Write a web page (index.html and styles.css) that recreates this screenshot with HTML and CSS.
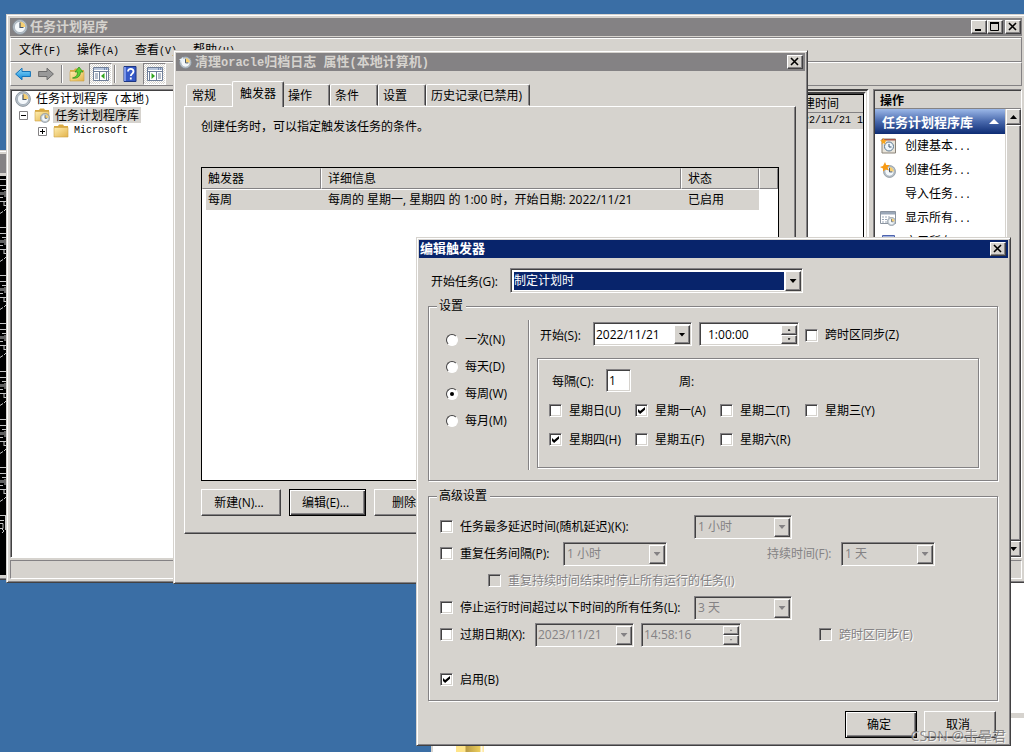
FILE: index.html
```html
<!DOCTYPE html>
<html lang="zh-CN">
<head>
<meta charset="utf-8">
<title>任务计划程序</title>
<link rel="stylesheet" href="styles.css">
</head>
<body>
<svg class="defs" aria-hidden="true">
  <defs>
    <linearGradient id="gold" x1="0" y1="0" x2="1" y2="1"><stop offset="0" stop-color="#ffeeb0"/><stop offset="1" stop-color="#e2b24a"/></linearGradient>
    <linearGradient id="sky" x1="0" y1="0" x2="0" y2="1"><stop offset="0" stop-color="#8fdcfb"/><stop offset="1" stop-color="#0c86d8"/></linearGradient>
    <symbol id="clock" viewBox="0 0 16 16">
      <circle cx="8" cy="8" r="7.4" fill="#b9c3cb" stroke="#7d8790" stroke-width=".8"/>
      <circle cx="8" cy="8" r="5.6" fill="#f4f8fb" stroke="#8c99a6" stroke-width=".6"/>
      <path d="M8 8V2.6A5.4 5.4 0 0 1 13.4 8Z" fill="#f6cf73"/>
      <path d="M8 3.5V8.5H11.5" fill="none" stroke="#4a5868" stroke-width="1.2"/>
    </symbol>
    <symbol id="folder" viewBox="0 0 16 16">
      <path d="M1 3h4l1-1.500h4l1 1.500h4v11H1z" fill="#d9a940"/>
      <path d="M1 4.500h14v9.500H1z" fill="url(#gold)" stroke="#cfa145" stroke-width=".6"/>
    </symbol>
    <symbol id="pane" viewBox="0 0 16 16">
      <path d="M.5 1.500h15v13H.5z" fill="#fff" stroke="#6f7f99"/>
      <path d="M1 2h14v2H1z" fill="#b8c6dc"/><path d="M11 3h1m1 0h1" stroke="#33538d"/>
      <path d="M1 5.500h14" stroke="#6f7f99"/>
    </symbol>
    <symbol id="fragment" viewBox="0 0 6 48">
      <path d="M0 .5h6M0 6.500h6M2 10.500h4M1 13v3M3 13v3M5 12v6M0 18.500h3M0 22.500h6M4 23v4M4 26.500h2M6 30l-2 2M3 32.500L0 34.500" fill="none" stroke="#c6c6c6"/>
    </symbol>
  </defs>
</svg>

<main class="desktop">
  <section class="window console" aria-label="控制台">
    <div class="titlebar"></div>
    <div class="console-screen">
      <svg><use href="#fragment"/></svg><svg><use href="#fragment"/></svg><svg><use href="#fragment"/></svg><svg><use href="#fragment"/></svg><svg><use href="#fragment"/></svg><svg><use href="#fragment"/></svg><svg><use href="#fragment"/></svg>
      <svg viewBox="0 0 6 48"><path d="M0 .5h6M5.500 1v14M0 5.500h4M0 8.500h3v5H0M2 14l2 2-2 2" fill="none" stroke="#c6c6c6"/></svg>
    </div>
  </section>

  <section class="explorer" aria-label="文件夹">
    <div class="explorer-top"></div>
    <div class="explorer-strip"></div>
    <div class="explorer-list"><span class="explorer-folder"></span></div>
  </section>

  <section class="window main-window">
    <header class="titlebar">
      <svg class="icon"><use href="#clock"/></svg>
      <h1 class="title">任务计划程序</h1>
      <div class="caption">
        <button class="cap" aria-label="最小化"><svg viewBox="0 0 12 10"><path d="M2 8h6" stroke="#000" stroke-width="2"/></svg></button>
        <button class="cap" aria-label="最大化"><svg viewBox="0 0 12 10"><path d="M1.500 1v7.500h8V1M1 1h9" fill="none" stroke="#000"/><path d="M1 1h9" stroke="#000" stroke-width="2"/></svg></button>
        <button class="cap cap-close" aria-label="关闭"><svg viewBox="0 0 12 10"><path d="M2 1l7 7M9 1L2 8" stroke="#000" stroke-width="1.600"/></svg></button>
      </div>
    </header>
    <nav class="menubar">
      <button>文件<span class="fix">(F)</span></button><button>操作<span class="fix">(A)</span></button><button>查看<span class="fix">(V)</span></button><button>帮助<span class="fix">(H)</span></button>
    </nav>
    <div class="toolbar">
      <button aria-label="后退"><svg class="icon" viewBox="0 0 16 16"><path d="M.6 8L7 2.200V5.500h8.400v5H7v3.300z" fill="url(#sky)" stroke="#1473b8"/></svg></button>
      <button aria-label="前进"><svg class="icon" viewBox="0 0 16 16"><path d="M15.400 8L9 2.200V5.500H.6v5H9v3.300z" fill="#999" stroke="#6c6c6c"/></svg></button>
      <span class="sep"></span>
      <button class="up" aria-label="上一级"><svg class="icon" viewBox="0 0 16 16"><use href="#folder" y="1"/><path d="M3.500 12c4-1 5-3 5-6H6l4-5 4 5h-2.500c0 4-3 7-8 6z" fill="#5ccf35" stroke="#2b8b19" stroke-width=".7"/></svg></button>
      <button class="pressed" aria-label="控制台树"><svg class="icon" viewBox="0 0 16 16"><use href="#pane"/><path d="M2 8h3M2 10h3M2 12h3M6.500 6v8M13.500 6v8" stroke="#6f7f99"/><path d="M11.500 7v6L8 10z" fill="#2fa51e"/></svg></button>
      <span class="sep"></span>
      <button class="help" aria-label="帮助"><svg class="icon" viewBox="0 0 16 16"><path d="M2 .5h12v15H2z" fill="#3559c7" stroke="#1d3682"/><path d="M2 1h2v14H2z" fill="#7b96e8"/><path d="M6 5.500c0-3.500 5.500-3.300 5.500 0 0 2-2.700 2.200-2.700 4.500M8.800 11.500v2" fill="none" stroke="#fff" stroke-width="1.800"/></svg></button>
      <button class="pressed" aria-label="操作窗格"><svg class="icon" viewBox="0 0 16 16"><use href="#pane"/><path d="M11 8h3M11 10h3M11 12h3M9.500 6v8M2.500 6v8" stroke="#6f7f99"/><path d="M4.500 7v6L8 10z" fill="#2fa51e"/></svg></button>
    </div>
    <div class="panes">
      <ul class="tree">
        <li><svg class="icon"><use href="#clock"/></svg><span class="node">任务计划程序<span class="fix"> (</span>本地<span class="fix">)</span></span></li>
        <li class="lvl1"><button class="twist" aria-label="折叠"><svg viewBox="0 0 9 9"><path d="M.5.5h8v8h-8z" fill="#fff" stroke="#848284"/><path d="M2 4.500h5" stroke="#000"/></svg></button><svg class="icon" viewBox="0 0 16 16"><use href="#folder"/><use href="#clock" x="6" y="6" width="10" height="10"/></svg><span class="node selected">任务计划程序库</span></li>
        <li class="lvl2"><button class="twist" aria-label="展开"><svg viewBox="0 0 9 9"><path d="M.5.5h8v8h-8z" fill="#fff" stroke="#848284"/><path d="M2 4.500h5M4.500 2v5" stroke="#000"/></svg></button><svg class="icon"><use href="#folder"/></svg><span class="node fix">Microsoft</span></li>
      </ul>
      <div class="list-pane">
        <table class="task-list">
          <thead><tr><td></td><th>创建时间</th></tr></thead>
          <tbody><tr><td></td><td class="when fix">2022/11/21 1</td></tr></tbody>
        </table>
      </div>
      <aside class="actions">
        <h2 class="actions-head">操作</h2>
        <div class="actions-body">
          <div class="actions-list">
            <h3 class="actions-title">任务计划程序库<svg viewBox="0 0 10 5"><path d="M5 0l5 5H0z" fill="#fff"/></svg></h3>
            <button class="action"><svg class="icon" viewBox="0 0 16 16"><path d="M2 1h13.500v14H2z" fill="#e8e4da" stroke="#8a8378"/><path d="M2 1h13.500v1.500H2z" fill="#a9584a"/><circle cx="9" cy="8.500" r="4.500" fill="#eef5fa" stroke="#5b7892"/><path d="M9 6v3h2.500" fill="none" stroke="#3d5670"/><path d="M3.500 0l1 2 2.500.5-2 1.500.5 2.500-2-1.500-2 1.500.5-2.500L0 2.500 2.500 2z" fill="#f7a51c"/></svg><span>创建基本<span class="fix">...</span></span></button>
            <button class="action"><svg class="icon" viewBox="0 0 16 16"><use href="#clock" x="3" y="3" width="13" height="13"/><path d="M5 0l1.200 3L9.500 3 7.500 5.500 9 8.500 5.500 7.500 3 9.500V6.500L0 5l3-1z" fill="#f79a14"/></svg><span>创建任务<span class="fix">...</span></span></button>
            <button class="action"><span class="icon"></span><span>导入任务<span class="fix">...</span></span></button>
            <button class="action"><svg class="icon" viewBox="0 0 16 16"><path d="M.5 1.500h15v12H.5z" fill="#fff" stroke="#8b94a0"/><path d="M1 2h14v2.500H1z" fill="#9aa7b8"/><path d="M2 7h2m1 0h2m1 0h2M2 9.500h2m1 0h2M2 12h2m1 0h2" stroke="#9aa7b8"/><use href="#clock" x="7" y="7" width="9" height="9"/></svg><span>显示所有<span class="fix">...</span></span></button>
            <button class="action"><svg class="icon" viewBox="0 0 16 16"><path d="M2.500 1.500h12v13h-12z" fill="#dfe7fa" stroke="#4d63ad"/><path d="M3 2h11v2H3z" fill="#9fb0df"/></svg><span>启用所有<span class="fix">...</span></span></button>
          </div>
          <div class="scrollbar">
            <button class="sb" aria-label="向上"><svg viewBox="0 0 7 4"><path d="M3.500 0L7 4H0z"/></svg></button>
            <div class="thumb"></div>
            <button class="sb" aria-label="向下"><svg viewBox="0 0 7 4"><path d="M0 0h7L3.500 4z"/></svg></button>
          </div>
        </div>
      </aside>
    </div>
    <footer class="statusbar"></footer>
  </section>

  <section class="window props" role="dialog" aria-labelledby="props-title">
    <header class="titlebar">
      <svg class="icon small" viewBox="0 0 16 16"><use href="#clock"/><path d="M4 1l1 2.500L8 4 6 5.500 6.500 8 4 6.500 1.500 8 2 5.500 0 4l3-.5z" fill="#e9f3fb"/></svg>
      <h2 class="title" id="props-title">清理<span class="title-latin">oracle</span>归档日志<span class="title-latin"> </span>属性<span class="title-latin">(</span>本地计算机<span class="title-latin">)</span></h2>
      <div class="caption"><button class="cap" aria-label="关闭"><svg viewBox="0 0 12 10"><path d="M2 1l7 7M9 1L2 8" stroke="#000" stroke-width="1.600"/></svg></button></div>
    </header>
    <div class="props-body">
      <div class="tabs" role="tablist">
        <button class="tab" role="tab">常规</button><button class="tab active" role="tab" aria-selected="true">触发器</button><button class="tab" role="tab">操作</button><button class="tab" role="tab">条件</button><button class="tab" role="tab">设置</button><button class="tab wide" role="tab">历史记录(已禁用)</button>
      </div>
      <div class="tab-panel" role="tabpanel">
        <p class="hint">创建任务时，可以指定触发该任务的条件。</p>
        <div class="trigger-box">
          <table class="triggers">
            <colgroup><col class="c1"><col class="c2"><col class="c3"><col></colgroup>
            <thead><tr><th>触发器</th><th>详细信息</th><th>状态</th><th></th></tr></thead>
            <tbody><tr><td>每周</td><td>每周的 星期一, 星期四 的 1:00 时，开始日期: 2022/11/21</td><td>已启用</td><td></td></tr></tbody>
          </table>
        </div>
        <div class="props-buttons"><button class="btn">新建(N)...</button><button class="btn default">编辑(E)...</button><button class="btn">删除(D)</button></div>
      </div>
    </div>
  </section>

  <section class="window edit" role="dialog" aria-labelledby="edit-title">
    <header class="titlebar current">
      <h2 class="title" id="edit-title">编辑触发器</h2>
      <div class="caption"><button class="cap" aria-label="关闭"><svg viewBox="0 0 12 10"><path d="M2 1l7 7M9 1L2 8" stroke="#000" stroke-width="1.600"/></svg></button></div>
    </header>
    <form class="edit-body">
      <div class="begin">
        <label for="begin">开始任务(G):</label>
        <div class="combo focus"><select id="begin"><option>制定计划时</option></select><span class="drop"></span></div>
      </div>
      <fieldset class="group settings">
        <legend>设置</legend>
        <div class="settings-body">
          <div class="radios">
            <label><input type="radio" name="freq">一次(N)</label>
            <label><input type="radio" name="freq">每天(D)</label>
            <label><input type="radio" name="freq" checked>每周(W)</label>
            <label><input type="radio" name="freq">每月(M)</label>
          </div>
          <div class="schedule">
            <div class="start">
              <label for="sdate">开始(S):</label>
              <div class="combo date"><input id="sdate" type="text" value="2022/11/21"><span class="drop"></span></div>
              <div class="combo time"><input class="indent" type="text" value="1:00:00" aria-label="开始时间"><span class="spin"><button type="button" aria-label="增加"></button><button type="button" aria-label="减少"></button></span></div>
              <label class="check"><input type="checkbox">跨时区同步(Z)</label>
            </div>
            <div class="weekly">
              <div class="every"><label for="every">每隔(C):</label><div class="combo num"><input id="every" type="text" value="1"></div><span class="unit">周:</span></div>
              <div class="days">
                <label class="check"><input type="checkbox">星期日(U)</label>
                <label class="check"><input type="checkbox" checked>星期一(A)</label>
                <label class="check"><input type="checkbox">星期二(T)</label>
                <label class="check"><input type="checkbox">星期三(Y)</label>
                <label class="check"><input type="checkbox" checked>星期四(H)</label>
                <label class="check"><input type="checkbox">星期五(F)</label>
                <label class="check"><input type="checkbox">星期六(R)</label>
              </div>
            </div>
          </div>
        </div>
      </fieldset>
      <fieldset class="group advanced">
        <legend>高级设置</legend>
        <div class="advanced-body">
          <div class="row"><label class="check delay"><input type="checkbox">任务最多延迟时间(随机延迟)(K):</label><div class="combo off w98"><select disabled aria-label="延迟"><option>1 小时</option></select><span class="drop"></span></div></div>
          <div class="row"><label class="check repeat"><input type="checkbox">重复任务间隔(P):</label><div class="combo off w104"><select disabled aria-label="间隔"><option>1 小时</option></select><span class="drop"></span></div><label class="duration" for="duration">持续时间(F):</label><div class="combo off w94"><select id="duration" disabled><option>1 天</option></select><span class="drop"></span></div></div>
          <div class="row nested"><label class="check off"><input type="checkbox" disabled>重复持续时间结束时停止所有运行的任务(I)</label></div>
          <div class="row"><label class="check delay"><input type="checkbox">停止运行时间超过以下时间的所有任务(L):</label><div class="combo off w98"><select disabled aria-label="停止时间"><option>3 天</option></select><span class="drop"></span></div></div>
          <div class="row"><label class="check expire"><input type="checkbox">过期日期(X):</label><div class="combo date off"><input type="text" value="2023/11/21" disabled aria-label="过期日期"><span class="drop"></span></div><div class="combo time off"><input type="text" value="14:58:16" disabled aria-label="过期时间"><span class="spin"><button type="button" disabled aria-label="增加"></button><button type="button" disabled aria-label="减少"></button></span></div><label class="check off sync"><input type="checkbox" disabled>跨时区同步(E)</label></div>
          <div class="row enable"><label class="check"><input type="checkbox" checked>启用(B)</label></div>
        </div>
      </fieldset>
      <div class="edit-buttons"><button type="button" class="btn default">确定</button><button type="button" class="btn">取消</button></div>
    </form>
  </section>
  <div class="watermark">CSDN @击晕君</div>
</main>
</body>
</html>
```
FILE: styles.css
```css
:root {
  --face: #d6d3ce;
  --mid: #848284;
  --dark: #424142;
  --navy: #08246b;
}
* { box-sizing: border-box; }
body {
  margin: 0;
  background: #3a6ea5;
  color: #000;
  font: 12px/16px "Open Sans", "Noto Sans CJK SC", sans-serif;
}
h1, h2, h3, p, ul { margin: 0; padding: 0; font-size: 12px; list-style: none; }
button, input, select { font: inherit; color: inherit; margin: 0; padding: 0; border: 0; border-radius: 0; background: none; }
.defs { position: absolute; width: 0; height: 0; }
.desktop { position: relative; min-height: 100vh; overflow: hidden; }
.icon { width: 16px; height: 16px; flex: none; display: block; }
.icon.small { width: 13px; height: 13px; }
.fix { font-family: "Liberation Mono", "Noto Sans CJK SC", monospace; font-size: 10px; white-space: pre; }

/* windows */
.window {
  position: absolute;
  display: flex;
  flex-direction: column;
  background: var(--face);
  border: 1px solid;
  border-color: var(--face) var(--dark) var(--dark) var(--face);
  box-shadow: inset 1px 1px #fff, inset -1px -1px var(--mid);
  padding: 2px;
}
.titlebar { display: flex; align-items: center; height: 18px; flex: none; background: var(--mid); color: var(--face); padding: 0 2px; }
.titlebar.current { background: var(--navy); color: #fff; padding-left: 1px; }
.title { flex: 1; padding-top: 2px; font: bold 13px/18px "Liberation Mono", "Noto Sans CJK SC", monospace; white-space: pre; }
.title-latin { font-size: 12px; }
.caption { display: flex; }
.cap, .btn, .drop, .spin button, .sb, .thumb {
  background: var(--face);
  border: 1px solid;
  border-color: #fff var(--dark) var(--dark) #fff;
  box-shadow: inset -1px -1px var(--mid);
}
.cap { width: 16px; height: 14px; display: grid; place-items: center; }
.cap svg { width: 12px; height: 10px; }
.cap-close { margin-left: 2px; }

/* windows behind */
.console { left: -600px; top: 150px; width: 640px; height: 430px; }
.console .titlebar { height: 19px; margin-top: 1px; }
.console-screen { flex: 1; background: #000; margin: 3px 0 2px; padding-top: 3px; padding-left: 597px; overflow: hidden; }
.console-screen svg { display: block; width: 6px; height: 48px; }
.explorer { position: absolute; left: 431px; top: 570px; right: 0; bottom: 0; display: flex; flex-direction: column; background: #fff; border-left: 2px solid var(--face); }
.explorer-top { flex: 1; }
.explorer-strip { height: 5px; background: var(--face); }
.explorer-list { height: 34px; display: flex; align-items: flex-end; padding-left: 23px; }
.explorer-folder { width: 28px; height: 14px; background: linear-gradient(90deg, #ffe58a 0 9px, #b99b45 10px, #ecce5c 24px, #fff 25px, #ffeaa6 27px); }

/* main window */
.main-window { left: 6px; right: -2px; top: 14px; height: 569px; padding: 3px 2px 2px 3px; }
.main-window > .titlebar { height: 18px; margin-right: 1px; padding-right: 1px; }
.main-window .title { padding-left: 2px; }
.menubar, .toolbar { display: flex; flex: none; border: 1px solid; border-color: #fff var(--mid) var(--mid) #fff; margin-right: 1px; }
.menubar { margin-top: 1px; height: 25px; padding: 2px 0 0 8px; border-top-color: var(--mid); box-shadow: inset 0 1px #fff; font-family: "Noto Sans CJK SC", sans-serif; }
.menubar button { width: 58px; text-align: left; }
.toolbar { height: 24px; align-items: center; padding-left: 4px; }
.toolbar button { width: 23px; height: 22px; display: flex; align-items: center; justify-content: flex-start; }
.toolbar .up { width: 20px; }
.toolbar .help { width: 21px; }
.toolbar .pressed { justify-content: center; margin-right: 2px; border: 1px solid; border-color: var(--mid) #fff #fff var(--mid); background: repeating-conic-gradient(#fff 0 25%, var(--face) 0 50%) 0 0 / 2px 2px; }
.sep { width: 2px; height: 18px; margin: 0 6px 0 0; border-left: 1px solid var(--mid); border-right: 1px solid #fff; }
.panes { flex: 1; min-height: 0; display: flex; margin-top: 3px; font-family: "Noto Sans CJK SC", sans-serif; }
.tree { width: 260px; background: #fff; border: 1px solid; border-color: var(--mid) #fff #fff var(--mid); box-shadow: inset 1px 1px var(--dark); padding: 1px 0 0 4px; }
.tree li { display: flex; align-items: center; height: 16px; }
.tree .node { margin-left: 3px; padding: 0 2px; line-height: 16px; white-space: nowrap; }
.tree .selected { background: var(--face); }
.tree .lvl1 { padding-left: 4px; }
.tree .lvl2 { padding-left: 23px; }
.twist { width: 9px; height: 9px; margin-right: 6px; }
.twist svg { display: block; width: 9px; height: 9px; }
.list-pane { flex: 1; min-width: 0; margin: 0 4px; background: #fff; border: 5px double var(--mid); border-color: var(--dark) #fff #fff var(--dark); box-shadow: inset 0 1px #000, inset -1px 0 #000; background-clip: padding-box; padding: 1px 1px 0 0; }
.task-list { width: 100%; table-layout: fixed; border-collapse: collapse; background: linear-gradient(var(--face), var(--face)); }
.task-list th { width: 76px; font-weight: normal; text-align: left; border-bottom: 1px solid var(--mid); }
.task-list th, .task-list td { height: 17px; padding: 0 0 0 4px; overflow: hidden; white-space: nowrap; line-height: 16px; }
.task-list th:last-child, .task-list td:last-child { width: 76px; }
.actions { width: 149px; margin-right: 1px; background: var(--face); display: flex; flex-direction: column; border: 1px solid; border-color: var(--mid) #fff #fff var(--mid); box-shadow: inset 1px 1px var(--dark); padding: 1px 0 0 1px; }
.actions-head { line-height: 17px; padding-left: 5px; border-bottom: 1px solid var(--mid); }
.actions-body { flex: 1; min-height: 0; display: flex; }
.actions-list { flex: 1; background: #fff; margin-right: 1px; }
.actions-title { display: flex; align-items: center; justify-content: space-between; height: 25px; padding: 0 6px 0 7px; color: #fff; font-size: 13px; background: linear-gradient(#9cb8e8, #4868ac 50%, #0d2c74); }
.actions-title svg { width: 10px; height: 5px; }
.action { display: flex; align-items: center; width: 100%; height: 24px; gap: 9px; padding-left: 5px; white-space: nowrap; }
.scrollbar { width: 15px; display: flex; flex-direction: column; }
.sb { height: 16px; display: grid; place-items: center; }
.sb svg { width: 7px; height: 4px; }
.thumb { flex: 1; }
.statusbar { height: 19px; flex: none; margin: 2px 1px 1px 0; border: 1px solid; border-color: var(--mid) #fff #fff var(--mid); }

/* buttons */
.btn { height: 27px; text-align: center; white-space: nowrap; padding-right: 4px; }
.btn.default { border-color: #000; box-shadow: inset 1px 1px #fff, inset -1px -1px var(--dark), inset -2px -2px var(--mid); }

/* properties dialog */
.props { left: 173px; top: 50px; width: 635px; height: 534px; }
.props .title { padding-left: 3px; }
.props > .titlebar { padding-left: 3px; }
.props-body { flex: 1; padding: 10px 9px 47px 8px; display: flex; flex-direction: column; }
.tabs { display: flex; align-items: flex-end; height: 25px; padding-left: 2px; }
.tab { width: 48px; height: 22px; padding: 1px 0 0 4px; text-align: left; background: var(--face); border: 1px solid; border-color: #fff var(--dark) transparent #fff; border-radius: 2px 2px 0 0; box-shadow: inset -1px 0 var(--mid); white-space: nowrap; }
.tab:first-child { width: 46px; box-shadow: none; border-right: 0; padding-left: 5px; }
.tab.active { position: relative; width: 52px; height: 26px; margin-bottom: -1px; padding: 0 0 2px 7px; border-bottom: 0; }
.tab.active + .tab { width: 46px; border-left-color: var(--face); padding-left: 3px; }
.tab.wide { width: 104px; }
.tab-panel { flex: 1; border: 1px solid; border-color: #fff var(--dark) var(--dark) #fff; box-shadow: inset -1px -1px var(--mid); padding: 12px 16px 17px; display: flex; flex-direction: column; }
.hint { height: 48px; }
.trigger-box { flex: 1; background: #fff; border: 1px solid #000; }
.triggers { width: 100%; table-layout: fixed; border-spacing: 0; }
.c1 { width: 119px; }
.c2 { width: 360px; }
.c3 { width: 78px; }
.triggers th, .triggers td { text-align: left; font-weight: normal; height: 21px; line-height: 18px; padding: 0 0 0 6px; white-space: nowrap; }
.triggers th { background: var(--face); border: 1px solid; border-color: var(--face) var(--mid) var(--mid) #fff; }
.triggers th:first-child { border-left-color: var(--face); padding-left: 5px; }
.triggers td { background: var(--face); padding-left: 7px; border-top: 1px solid #fff; }
.triggers td:first-child { border-left: 4px solid #fff; padding-left: 2px; }
.triggers td:last-child { background: #fff; }
.props-buttons { display: flex; gap: 8px; margin-top: 8px; }
.props-buttons .btn { width: 80px; }
.props-buttons .default { width: 77px; }

/* edit dialog */
.edit { left: 416px; top: 237px; width: 595px; }
.edit-body { padding: 10px 10px 5px 9px; }
.combo { display: flex; height: 24px; flex: none; background: #fff; border: 1px solid; border-color: var(--mid) #fff #fff var(--mid); box-shadow: inset 1px 1px var(--dark), inset -1px -1px var(--face); padding: 2px 1px 1px 2px; }
.combo select, .combo input { appearance: none; flex: 1; min-width: 0; outline: 0; opacity: 1; color: inherit; }
.combo.off { background: var(--face); color: var(--mid); }
.combo.off select { padding-left: 1px; }
.drop { width: 16px; flex: none; display: grid; place-items: center; pointer-events: none; }
.drop::after, .spin button::after { content: ""; width: 7px; height: 4px; background: #000; clip-path: polygon(0 0, 100% 0, 50% 100%); }
.off .drop::after, .off .spin button::after { background: var(--mid); }
.spin { width: 16px; display: flex; flex-direction: column; }
.spin button { flex: 1; min-height: 0; display: grid; place-items: center; }
.spin button::after { width: 3px; height: 2px; }
.spin button:first-child::after { clip-path: polygon(50% 0, 100% 100%, 0 100%); }
.begin { display: flex; align-items: center; padding-left: 3px; }
.begin label { width: 79px; padding-top: 2px; }
.begin .combo { width: 293px; height: 25px; }
.focus select { background: var(--navy); color: #fff; border: 1px solid #fff; }
.group { margin: 5px 0 0; padding: 0; min-width: 0; border: 1px solid var(--mid); box-shadow: 1px 1px #fff, inset 1px 1px #fff; }
.group legend { margin-left: 8px; padding: 0 3px 0 2px; background: var(--face); }
.settings-body { display: flex; padding: 6px 18px 10px 17px; }
.radios { width: 84px; padding-top: 6px; border-right: 1px solid #fff; box-shadow: inset -1px 0 var(--mid); display: flex; flex-direction: column; height: 150px; }
.radios label { display: flex; align-items: center; height: 27px; gap: 7px; }
.radios input { appearance: none; width: 12px; height: 12px; border: 1px solid; border-color: var(--dark) #fff #fff var(--dark); border-radius: 50%; background: #fff; display: grid; place-items: center; }
.radios input:checked::before { content: ""; width: 4px; height: 4px; border-radius: 50%; background: #000; }
.schedule { flex: 1; margin-left: 7px; padding-top: 2px; }
.start { display: flex; align-items: center; padding-left: 3px; white-space: nowrap; }
.start > label:first-child { width: 53px; padding-top: 3px; }
.date { width: 99px; margin-right: 7px; }
.time { width: 100px; margin-right: 6px; }
.indent { padding-left: 6px; }
.check { display: flex; align-items: center; gap: 7px; white-space: nowrap; }
.start .check { padding-top: 2px; }
.check input { appearance: none; flex: none; width: 13px; height: 13px; background: #fff; border: 1px solid; border-color: var(--mid) #fff #fff var(--mid); box-shadow: inset 1px 1px var(--dark), inset -1px -1px var(--face); display: grid; place-items: center; }
.check input:checked::before { content: ""; width: 7px; height: 7px; background: #000; clip-path: polygon(0 28%, 30% 57%, 100% 0, 100% 40%, 30% 100%, 0 71%); }
.check.off { color: var(--mid); text-shadow: 1px 1px #fff; }
.check.off input { background: var(--face); }
.weekly { margin-top: 12px; height: 110px; padding: 10px 11px; border: 1px solid var(--mid); box-shadow: 1px 1px #fff, inset 1px 1px #fff; }
.every { display: flex; align-items: center; padding-left: 3px; height: 23px; }
.every label { width: 54px; padding-top: 3px; }
.num { width: 25px; height: 23px; }
.unit { margin-left: 48px; padding-top: 3px; }
.days { display: grid; grid-template-columns: 86px 85px 85px auto; grid-auto-rows: 29px; margin-top: 4px; }
.advanced { margin-top: 7px; }
.advanced-body { padding: 9px 11px 7px; }
.row { display: flex; align-items: center; height: 27px; white-space: nowrap; }
.delay { width: 254px; }
.repeat { width: 123px; }
.expire { width: 95px; }
.nested { padding-left: 48px; }
.duration { width: 74px; margin-left: 100px; color: var(--mid); }
.sync { margin-left: 72px; }
.w98 { width: 98px; }
.w104 { width: 104px; }
.w94 { width: 94px; }
.enable { margin-top: 18px; }
.edit-buttons { display: flex; justify-content: flex-end; gap: 7px; margin: 10px 2px 0 0; }
.edit-buttons .btn { width: 72px; }

.watermark { position: absolute; right: 18px; bottom: 6px; font-size: 14px; line-height: 20px; color: rgba(120, 118, 118, .85); text-shadow: 1px 1px rgba(255, 255, 255, .7); }
```
